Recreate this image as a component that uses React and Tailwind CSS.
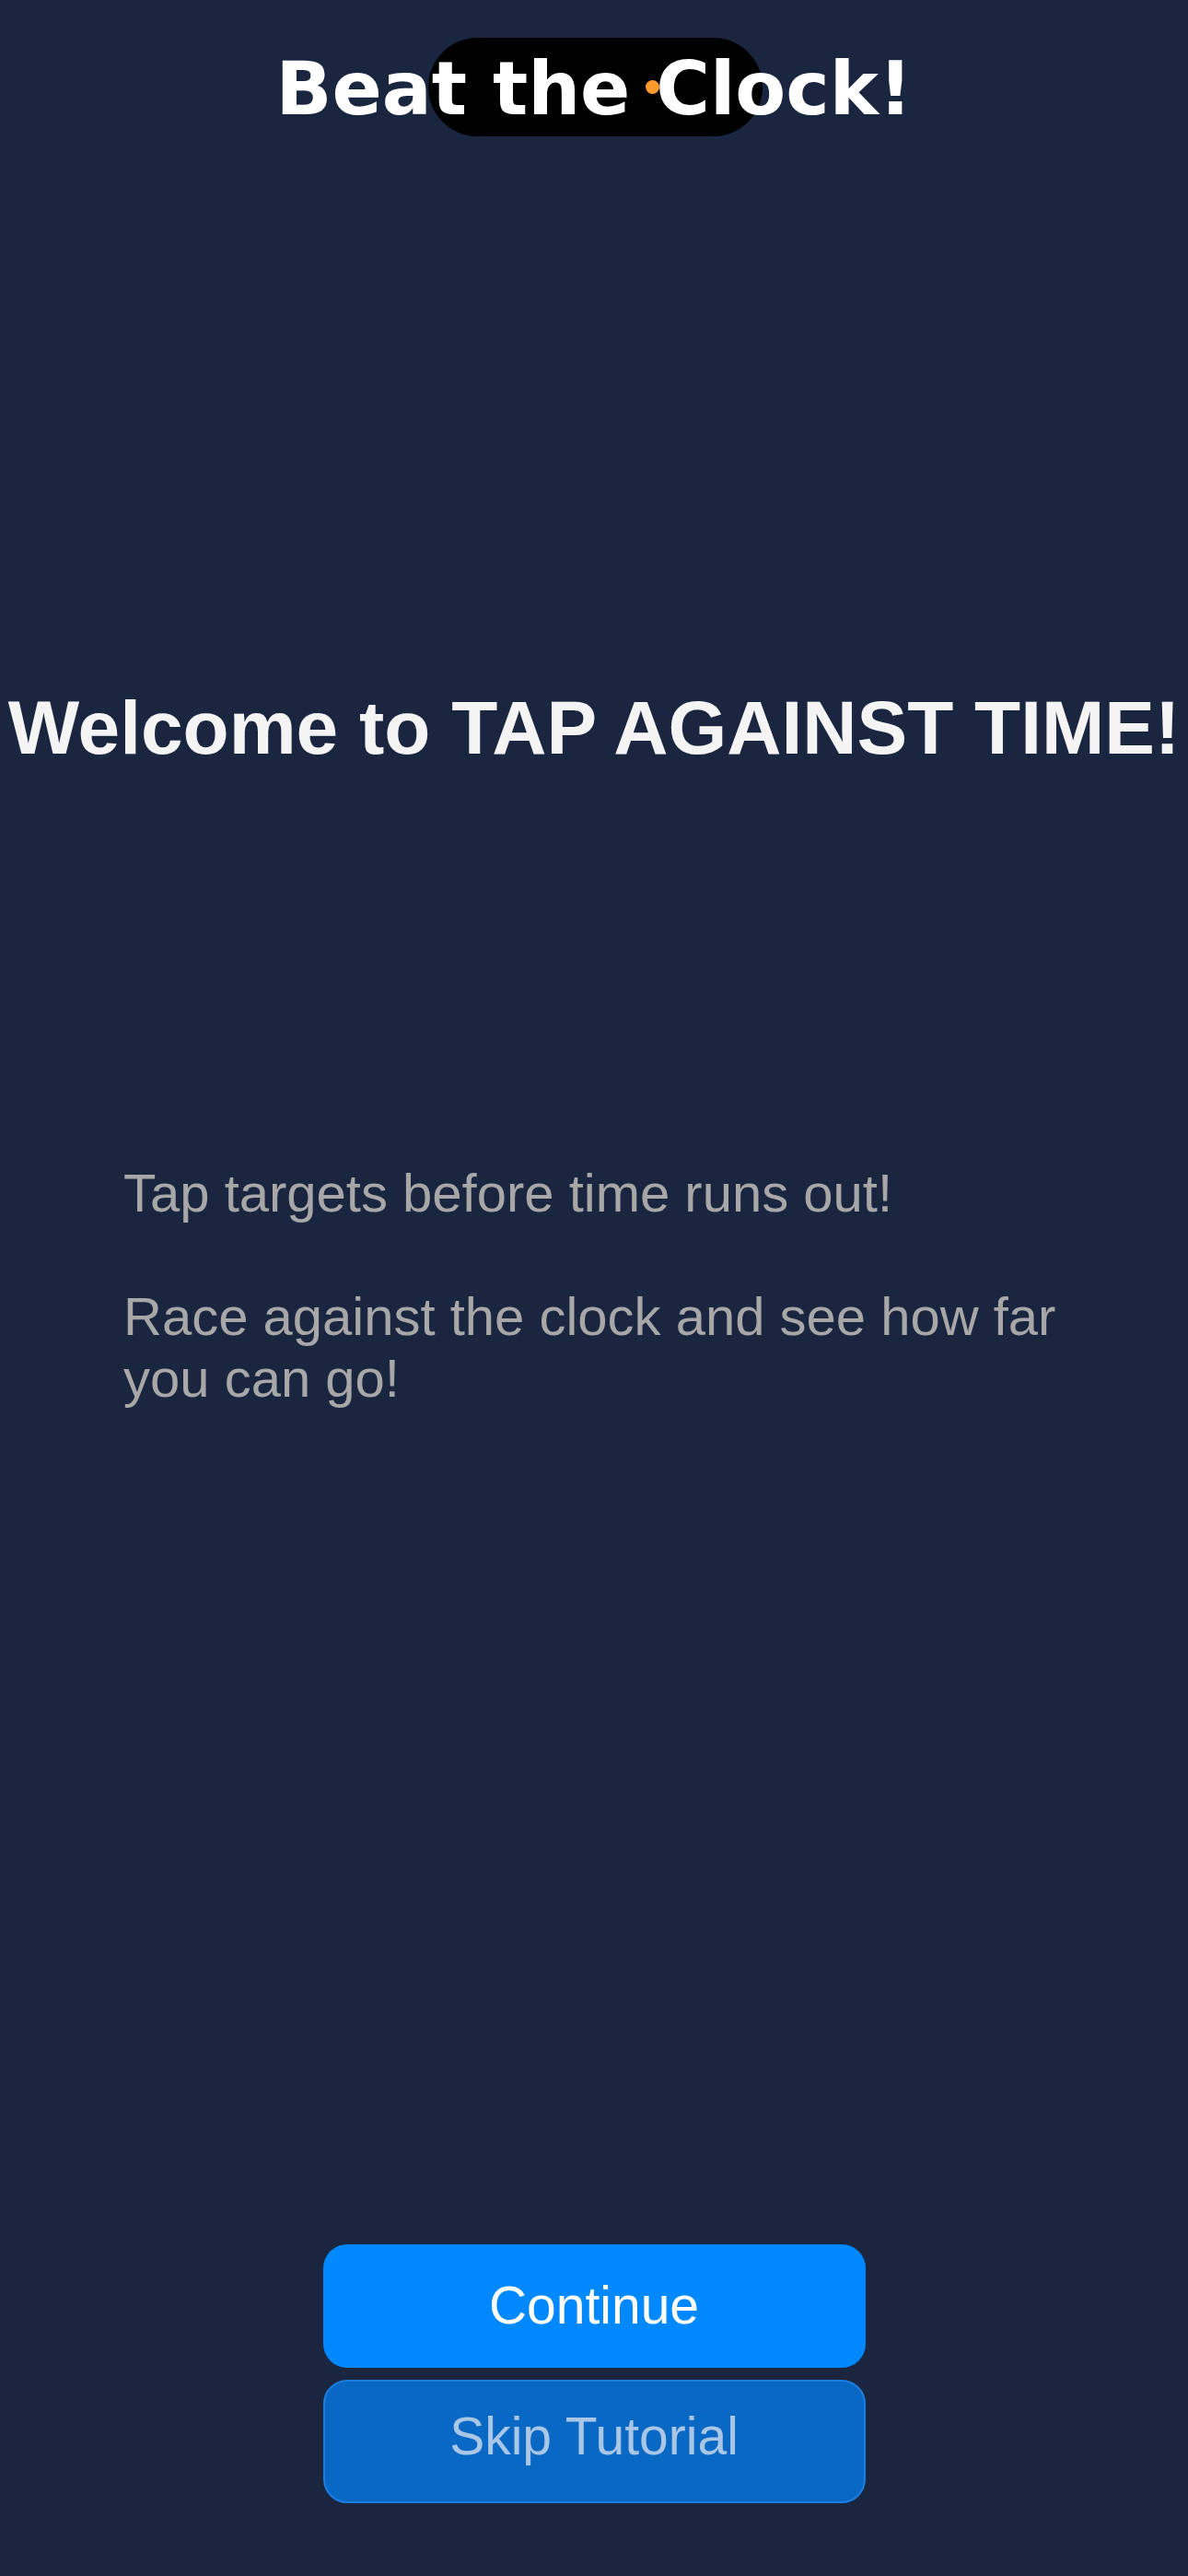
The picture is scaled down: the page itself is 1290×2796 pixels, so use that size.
import React from "react";

export default function App() {
    const steps = "Tap targets before time runs out!\n\nRace against the clock and see how far you can go!";

    return (
        <div className="relative flex min-h-[2796px] w-[1290px] flex-col bg-[#1a2540] font-['Liberation_Sans',Arial,sans-serif]">
            {/* status bar island */}
            <div className="absolute left-[465px] top-[41px] h-[107px] w-[363px] rounded-full bg-black" />
            <div className="absolute left-[701px] top-[87px] h-[15px] w-[15px] rounded-full bg-[#ff9a2e]" />

            {/* header */}
            <h1 className="relative z-10 pt-[57px] text-center font-['DejaVu_Sans',sans-serif] text-[80px] font-bold leading-none text-white">
                Beat the Clock!
            </h1>

            {/* title */}
            <h2 className="mt-[612px] whitespace-nowrap text-center text-[82px] font-bold leading-none text-[#f4f4f4]">
                Welcome to TAP AGAINST TIME!
            </h2>

            {/* tutorial text */}
            <p className="mt-[430px] whitespace-pre-line px-[134px] text-[58px] leading-[67px] text-[#a7a7a7]">
                {steps}
            </p>

            {/* buttons */}
            <div className="mt-auto flex flex-col items-center gap-[13px] pb-[79px]">
                <button className="h-[134px] w-[589px] rounded-[26px] bg-[#0088ff] text-[57px] text-white">
                    Continue
                </button>
                <button className="h-[134px] w-[589px] rounded-[26px] border-2 border-[#1b7ee0] bg-[#0968c3] pb-[10px] text-[57px] text-[#a9c6e6]">
                    Skip Tutorial
                </button>
            </div>
        </div>
    );
}
